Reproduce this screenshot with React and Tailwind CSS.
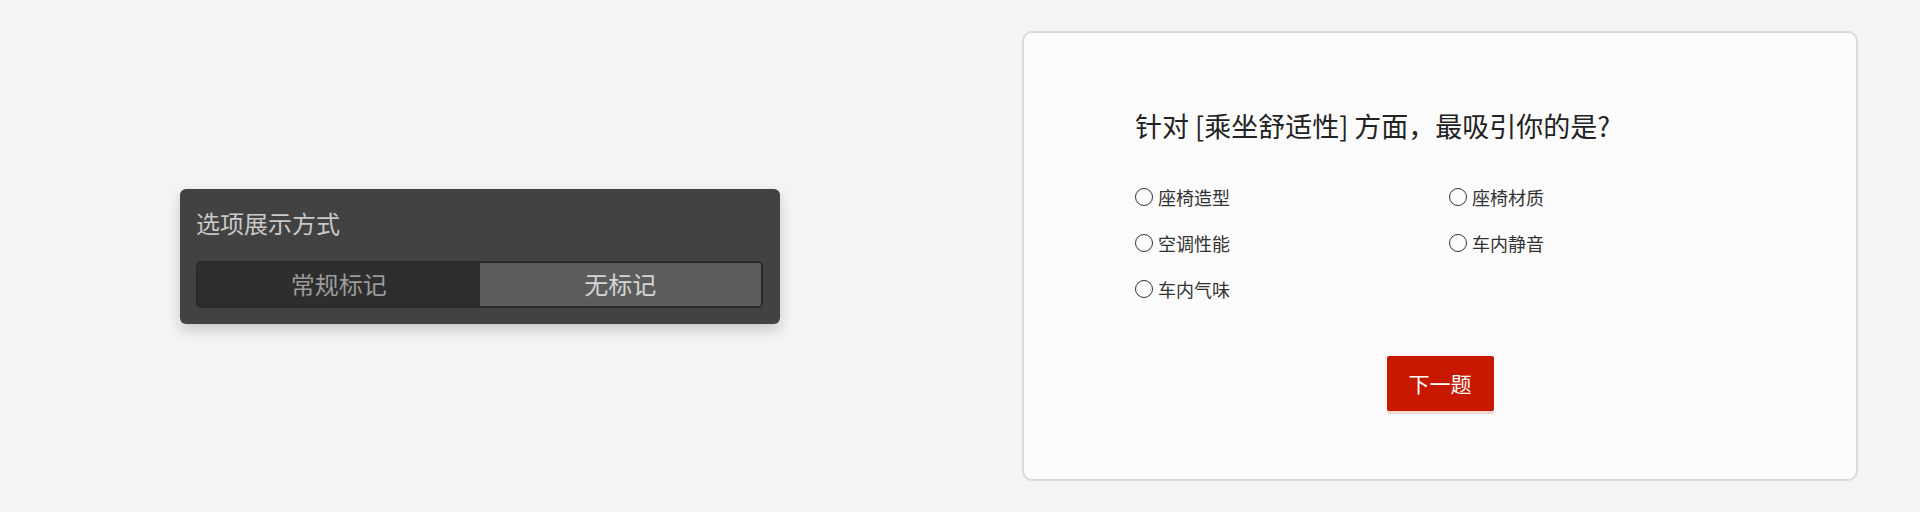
import React, { useState } from "react";

const font = { fontFamily: '"Noto Sans CJK SC", "Noto Sans", sans-serif' };

const options = ["座椅造型", "座椅材质", "空调性能", "车内静音", "车内气味"];

const DisplayModePanel = () => {
  const [mode, setMode] = useState("none");

  return (
    <div className="w-[600px] h-[135px] rounded-md bg-[#424242] px-4 pt-[18px] shadow-[0_6px_14px_rgba(0,0,0,0.18)]">
      <div className="h-[32px] text-[24px] leading-[32px] text-[#c9c9c9]">选项展示方式</div>
      <div className="mt-[22px] flex h-[47px] w-[567px] overflow-hidden rounded-[5px] border-2 border-[#2a2a2a] bg-[#2e2e2e]">
        <button
          className={`flex-1 text-[24px] ${
            mode === "normal" ? "bg-[#5c5c5c] text-[#d4d4d4]" : "text-[#9b9b9b]"
          }`}
          onClick={() => setMode("normal")}
        >
          常规标记
        </button>
        <button
          className={`flex-1 text-[24px] ${
            mode === "none" ? "bg-[#5c5c5c] text-[#d4d4d4]" : "text-[#9b9b9b]"
          }`}
          onClick={() => setMode("none")}
        >
          无标记
        </button>
      </div>
    </div>
  );
};

const QuestionCard = () => {
  const [picked, setPicked] = useState(null);

  return (
    <div className="w-[836px] h-[450px] rounded-[10px] border-2 border-[#dadada] bg-[#fbfbfb] px-[111px] pt-[75px]">
      <div className="h-[36px] text-[27px] leading-[36px] text-[#222]">
        针对 [乘坐舒适性] 方面，最吸引你的是?
      </div>

      {/* Options */}
      <div className="mt-[40px] grid grid-cols-[314px_1fr] gap-y-[20px]">
        {options.map((opt) => (
          <label
            key={opt}
            className="flex h-[26px] cursor-pointer items-center gap-[5px] text-[18px] text-[#333]"
            onClick={() => setPicked(opt)}
          >
            <span className="flex h-[18px] w-[18px] items-center justify-center rounded-full border-[1.5px] border-[#333]">
              {picked === opt && <span className="h-[9px] w-[9px] rounded-full bg-[#333]" />}
            </span>
            {opt}
          </label>
        ))}
      </div>

      <div className="mt-[54px] flex justify-center">
        <button className="h-[55px] w-[107px] rounded-[2px] bg-[#c91800] text-[21px] text-white shadow-[0_3px_0_rgba(201,24,0,0.15)]">
          下一题
        </button>
      </div>
    </div>
  );
};

export default function App() {
  return (
    <div className="grid h-[512px] w-[1920px] grid-cols-2 items-center bg-[#f4f4f4]" style={font}>
      <div className="flex justify-center">
        <DisplayModePanel />
      </div>
      <div className="flex justify-center">
        <QuestionCard />
      </div>
    </div>
  );
}
